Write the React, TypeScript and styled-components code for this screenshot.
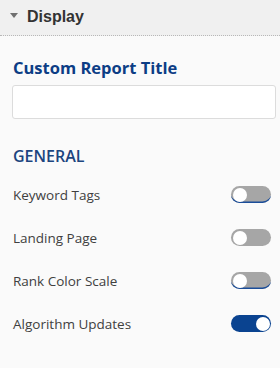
import styled, { createGlobalStyle } from "styled-components";

const GlobalStyle = createGlobalStyle`
  html, body {
    margin: 0;
    padding: 0;
    background: #fafafa;
  }
  * {
    box-sizing: border-box;
  }
`;

interface ToggleRow {
  label: string;
  on: boolean;
  underline?: boolean;
}

const rows: ToggleRow[] = [
  { label: "Keyword Tags", on: false, underline: true },
  { label: "Landing Page", on: false },
  { label: "Rank Color Scale", on: false, underline: true },
  { label: "Algorithm Updates", on: true },
];

export default function App() {
  return (
    <Panel>
      <GlobalStyle />
      <Header>
        <Caret />
        <HeaderTitle>Display</HeaderTitle>
      </Header>
      <Body>
        <Title>Custom Report Title</Title>
        <TitleInput type="text" />
        <Section>GENERAL</Section>
        <List>
          {rows.map((row) => (
            <Row key={row.label}>
              <Label>{row.label}</Label>
              <Switch $on={row.on} $underline={row.underline}>
                <Knob $on={row.on} />
              </Switch>
            </Row>
          ))}
        </List>
      </Body>
    </Panel>
  );
}

const Panel = styled.div`
  width: 280px;
  height: 368px;
  background: #fafafa;
  font-family: "Open Sans", "Liberation Sans", sans-serif;
  overflow: hidden;
`;

const Header = styled.div`
  height: 36px;
  display: flex;
  align-items: center;
  gap: 9px;
  padding: 0 10px 1px;
  background: #f0f0f0;
  border-bottom: 1px dotted #b8b8b8;
`;

const Caret = styled.span`
  width: 0;
  height: 0;
  border-left: 4px solid transparent;
  border-right: 4px solid transparent;
  border-top: 5px solid #707070;
  margin-top: -3px;
`;

const HeaderTitle = styled.h1`
  margin: 0;
  font-family: "Liberation Sans", Arial, sans-serif;
  font-size: 16px;
  font-weight: 700;
  color: #333;
`;

const Body = styled.div`
  display: flex;
  flex-direction: column;
  padding: 20px 4px 0 12px;
`;

const Title = styled.h2`
  margin: 0 0 0 1px;
  font-size: 16.5px;
  line-height: 24px;
  font-weight: 700;
  color: #0c3d85;
`;

const TitleInput = styled.input`
  margin-top: 5px;
  width: 264px;
  height: 34px;
  border: 1px solid #dcdcdc;
  border-radius: 3px;
  background: #fff;
  outline: none;
`;

const Section = styled.h3`
  margin: 26px 0 0 1px;
  font-size: 16px;
  line-height: 22px;
  font-weight: 600;
  color: #1c457f;
`;

const List = styled.div`
  display: flex;
  flex-direction: column;
  margin-top: 6px;
`;

const Row = styled.div`
  height: 43px;
  display: flex;
  align-items: center;
  justify-content: space-between;
  padding: 0 5px 0 1px;
`;

const Label = styled.span`
  font-size: 13.5px;
  color: #404040;
`;

const Switch = styled.span<{ $on: boolean; $underline?: boolean }>`
  position: relative;
  width: 40px;
  height: 17px;
  border-radius: 9px;
  background: ${(p) => (p.$on ? "#0a4390" : "#a6a6a6")};
  box-shadow: ${(p) => (p.$underline ? "inset 0 -2px 0 -0.5px #1a4d9a" : "none")};
`;

const Knob = styled.span<{ $on: boolean }>`
  position: absolute;
  top: 1.5px;
  left: ${(p) => (p.$on ? "24.5px" : "1.5px")};
  width: 14px;
  height: 14px;
  border-radius: 50%;
  background: #fff;
`;
